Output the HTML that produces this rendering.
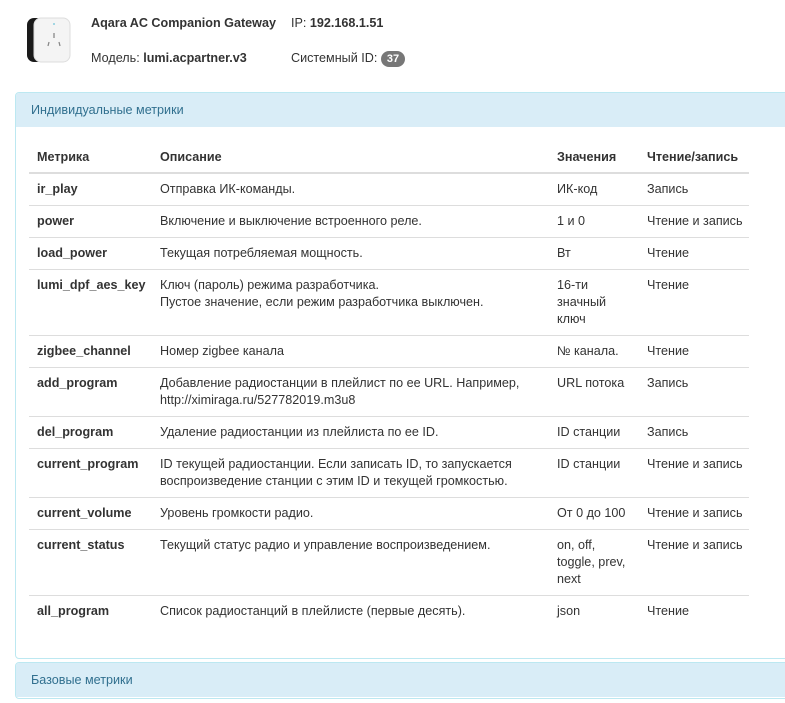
<!DOCTYPE html>
<html><head><meta charset="utf-8"><style>
body{margin:0;background:#fff;font-family:"Liberation Sans",Arial,sans-serif;font-size:12.6px;color:#333;width:785px;height:703px;overflow:hidden;position:relative}
.t{position:absolute;white-space:nowrap}
.panel{position:absolute;left:15px;width:790px;border:1px solid #bce8f1;border-radius:4px;background:#fff;overflow:hidden}
.ph{background:#d9edf7;color:#31708f;height:34px;line-height:35px;padding-left:15px}
table{border-collapse:collapse;position:absolute;left:13px;top:49px;width:720px;table-layout:fixed}
td,th{padding:7px 8px;line-height:17px;text-align:left;vertical-align:top;border-top:1px solid #ddd;white-space:nowrap;overflow:visible}
th{border-top:none;border-bottom:2px solid #ddd;padding-bottom:6px}
td:first-child{font-weight:bold}
.badge{display:inline-block;background:#777;color:#fff;font-weight:bold;font-size:11px;border-radius:9px;padding:1px 6px;line-height:14px}
</style></head><body>
<svg class="t" style="left:24px;top:16px" width="48" height="48" viewBox="0 0 48 48">
<rect x="3" y="2" width="40" height="44" rx="7" fill="#1a1a1a"/>
<rect x="10" y="2" width="36" height="44" rx="7" fill="#f4f4f4" stroke="#ddd"/>
<circle cx="30" cy="8" r="1" fill="#8cd"/>
<line x1="30" y1="17" x2="30" y2="22" stroke="#888" stroke-width="1.3"/>
<line x1="25" y1="26" x2="24" y2="30" stroke="#888" stroke-width="1.3"/>
<line x1="35" y1="26" x2="36" y2="30" stroke="#888" stroke-width="1.3"/>
</svg>
<div class="t" style="left:91px;top:16px;font-weight:bold">Aqara AC Companion Gateway</div>
<div class="t" style="left:291px;top:16px">IP: <b>192.168.1.51</b></div>
<div class="t" style="left:91px;top:51px">Модель: <b>lumi.acpartner.v3</b></div>
<div class="t" style="left:291px;top:51px">Системный ID: <span class="badge">37</span></div>
<div class="panel" style="top:92px;height:565px">
<div class="ph">Индивидуальные метрики</div>
<table>
<colgroup><col style="width:123px"><col style="width:397px"><col style="width:90px"><col style="width:110px"></colgroup>
<tr><th>Метрика</th><th>Описание</th><th>Значения</th><th>Чтение/запись</th></tr>
<tr><td>ir_play</td><td>Отправка ИК-команды.</td><td>ИК-код</td><td>Запись</td></tr>
<tr><td>power</td><td>Включение и выключение встроенного реле.</td><td>1 и 0</td><td>Чтение и запись</td></tr>
<tr><td>load_power</td><td>Текущая потребляемая мощность.</td><td>Вт</td><td>Чтение</td></tr>
<tr><td>lumi_dpf_aes_key</td><td>Ключ (пароль) режима разработчика.<br>Пустое значение, если режим разработчика выключен.</td><td>16-ти<br>значный<br>ключ</td><td>Чтение</td></tr>
<tr><td>zigbee_channel</td><td>Номер zigbee канала</td><td>№ канала.</td><td>Чтение</td></tr>
<tr><td>add_program</td><td>Добавление радиостанции в плейлист по ее URL. Например,<br>http://ximiraga.ru/527782019.m3u8</td><td>URL потока</td><td>Запись</td></tr>
<tr><td>del_program</td><td>Удаление радиостанции из плейлиста по ее ID.</td><td>ID станции</td><td>Запись</td></tr>
<tr><td>current_program</td><td>ID текущей радиостанции. Если записать ID, то запускается<br>воспроизведение станции с этим ID и текущей громкостью.</td><td>ID станции</td><td>Чтение и запись</td></tr>
<tr><td>current_volume</td><td>Уровень громкости радио.</td><td>От 0 до 100</td><td>Чтение и запись</td></tr>
<tr><td>current_status</td><td>Текущий статус радио и управление воспроизведением.</td><td>on, off,<br>toggle, prev,<br>next</td><td>Чтение и запись</td></tr>
<tr><td>all_program</td><td>Список радиостанций в плейлисте (первые десять).</td><td>json</td><td>Чтение</td></tr>
</table>
</div>
<div class="panel" style="top:662px;height:35px">
<div class="ph">Базовые метрики</div>
</div>
</body></html>
